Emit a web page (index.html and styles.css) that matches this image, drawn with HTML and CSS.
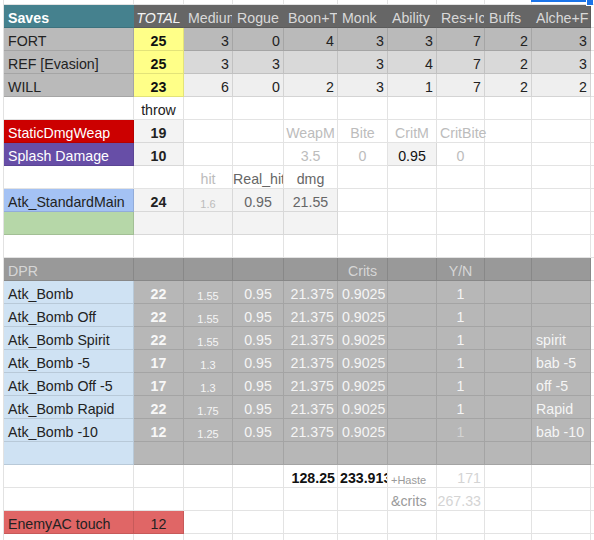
FILE: index.html
```html
<!DOCTYPE html>
<html>
<head>
<meta charset="utf-8">
<link rel="stylesheet" href="styles.css">
</head>
<body>
<div class="sheet">
  <div class="c top"></div><div class="c top"></div><div class="c top"></div><div class="c top"></div><div class="c top"></div><div class="c top"></div><div class="c top"></div><div class="c top"></div><div class="c top"></div><div class="c top"></div><div class="c top"></div>

  <div class="c teal b">Saves</div><div class="c dk it ctr">TOTAL</div><div class="c dk">Medium</div><div class="c dk">Rogue</div><div class="c dk">Boon+T</div><div class="c dk">Monk</div><div class="c dk">Ability</div><div class="c dk">Res+Ic</div><div class="c dk">Buffs</div><div class="c dk last">Alche+F</div><div class="c"></div>

  <div class="c g1">FORT</div><div class="c yel b ctr">25</div><div class="c g1 r">3</div><div class="c g1 r">0</div><div class="c g1 r">4</div><div class="c g1 r">3</div><div class="c g1 r">3</div><div class="c g1 r">7</div><div class="c g1 r">2</div><div class="c g1 r">3</div><div class="c"></div>

  <div class="c g1">REF [Evasion]</div><div class="c yel b ctr">25</div><div class="c g2 r">3</div><div class="c g2 r">3</div><div class="c g2 r"></div><div class="c g2 r">3</div><div class="c g2 r">4</div><div class="c g2 r">7</div><div class="c g2 r">2</div><div class="c g2 r">3</div><div class="c"></div>

  <div class="c g1">WILL</div><div class="c yel b ctr">23</div><div class="c g3 r">6</div><div class="c g3 r">0</div><div class="c g3 r">2</div><div class="c g3 r">3</div><div class="c g3 r">1</div><div class="c g3 r">7</div><div class="c g3 r">2</div><div class="c g3 r">2</div><div class="c"></div>

  <div class="c"></div><div class="c ctr">throw</div><div class="c"></div><div class="c"></div><div class="c"></div><div class="c"></div><div class="c"></div><div class="c"></div><div class="c"></div><div class="c"></div><div class="c"></div>

  <div class="c red">StaticDmgWeap</div><div class="c lt b ctr">19</div><div class="c"></div><div class="c"></div><div class="c faint ctr">WeapM</div><div class="c faint ctr">Bite</div><div class="c faint ctr">CritM</div><div class="c faint spill">CritBite</div><div class="c"></div><div class="c"></div><div class="c"></div>

  <div class="c purple">Splash Damage</div><div class="c lt b ctr">10</div><div class="c"></div><div class="c"></div><div class="c faint ctr">3.5</div><div class="c faint ctr">0</div><div class="c lt ctr blk">0.95</div><div class="c faint ctr">0</div><div class="c"></div><div class="c"></div><div class="c"></div>

  <div class="c"></div><div class="c"></div><div class="c faint ctr">hit</div><div class="c mid ctr">Real_hit</div><div class="c mid ctr">dmg</div><div class="c"></div><div class="c"></div><div class="c"></div><div class="c"></div><div class="c"></div><div class="c"></div>

  <div class="c blue">Atk_StandardMain</div><div class="c lt b ctr">24</div><div class="c lt faint ctr sm">1.6</div><div class="c lt mid ctr">0.95</div><div class="c lt mid ctr">21.55</div><div class="c"></div><div class="c"></div><div class="c"></div><div class="c"></div><div class="c"></div><div class="c"></div>

  <div class="c green"></div><div class="c lt"></div><div class="c lt"></div><div class="c lt"></div><div class="c lt"></div><div class="c"></div><div class="c"></div><div class="c"></div><div class="c"></div><div class="c"></div><div class="c"></div>

  <div class="c"></div><div class="c"></div><div class="c"></div><div class="c"></div><div class="c"></div><div class="c"></div><div class="c"></div><div class="c"></div><div class="c"></div><div class="c"></div><div class="c"></div>

  <div class="c g9">DPR</div><div class="c g9"></div><div class="c g9"></div><div class="c g9"></div><div class="c g9"></div><div class="c g9 ctr">Crits</div><div class="c g9"></div><div class="c g9 ctr">Y/N</div><div class="c g9"></div><div class="c g9"></div><div class="c"></div>

  <div class="c lb">Atk_Bomb</div><div class="c g7 b ctr">22</div><div class="c g7 ctr sm">1.55</div><div class="c g7 ctr">0.95</div><div class="c g7 r">21.375</div><div class="c g7 r">0.9025</div><div class="c g7"></div><div class="c g7 ctr">1</div><div class="c g7"></div><div class="c g7"></div><div class="c"></div>

  <div class="c lb">Atk_Bomb Off</div><div class="c g7 b ctr">22</div><div class="c g7 ctr sm">1.55</div><div class="c g7 ctr">0.95</div><div class="c g7 r">21.375</div><div class="c g7 r">0.9025</div><div class="c g7"></div><div class="c g7 ctr">1</div><div class="c g7"></div><div class="c g7"></div><div class="c"></div>

  <div class="c lb">Atk_Bomb Spirit</div><div class="c g7 b ctr">22</div><div class="c g7 ctr sm">1.55</div><div class="c g7 ctr">0.95</div><div class="c g7 r">21.375</div><div class="c g7 r">0.9025</div><div class="c g7"></div><div class="c g7 ctr">1</div><div class="c g7"></div><div class="c g7">spirit</div><div class="c"></div>

  <div class="c lb">Atk_Bomb -5</div><div class="c g7 b ctr">17</div><div class="c g7 ctr sm">1.3</div><div class="c g7 ctr">0.95</div><div class="c g7 r">21.375</div><div class="c g7 r">0.9025</div><div class="c g7"></div><div class="c g7 ctr">1</div><div class="c g7"></div><div class="c g7">bab -5</div><div class="c"></div>

  <div class="c lb">Atk_Bomb Off -5</div><div class="c g7 b ctr">17</div><div class="c g7 ctr sm">1.3</div><div class="c g7 ctr">0.95</div><div class="c g7 r">21.375</div><div class="c g7 r">0.9025</div><div class="c g7"></div><div class="c g7 ctr">1</div><div class="c g7"></div><div class="c g7">off -5</div><div class="c"></div>

  <div class="c lb">Atk_Bomb Rapid</div><div class="c g7 b ctr">22</div><div class="c g7 ctr sm">1.75</div><div class="c g7 ctr">0.95</div><div class="c g7 r">21.375</div><div class="c g7 r">0.9025</div><div class="c g7"></div><div class="c g7 ctr">1</div><div class="c g7"></div><div class="c g7">Rapid</div><div class="c"></div>

  <div class="c lb">Atk_Bomb -10</div><div class="c g7 b ctr">12</div><div class="c g7 ctr sm">1.25</div><div class="c g7 ctr">0.95</div><div class="c g7 r">21.375</div><div class="c g7 r">0.9025</div><div class="c g7"></div><div class="c g7 ctr dim">1</div><div class="c g7"></div><div class="c g7">bab -10</div><div class="c"></div>

  <div class="c lb"></div><div class="c g7"></div><div class="c g7"></div><div class="c g7"></div><div class="c g7"></div><div class="c g7"></div><div class="c g7"></div><div class="c g7"></div><div class="c g7"></div><div class="c g7"></div><div class="c"></div>

  <div class="c"></div><div class="c"></div><div class="c"></div><div class="c"></div><div class="c b r blk tight">128.25</div><div class="c b blk tight">233.913</div><div class="c hint sm">+Haste</div><div class="c pale r">171</div><div class="c"></div><div class="c"></div><div class="c"></div>

  <div class="c"></div><div class="c"></div><div class="c"></div><div class="c"></div><div class="c"></div><div class="c"></div><div class="c hint">&amp;crits</div><div class="c pale r">267.33</div><div class="c"></div><div class="c"></div><div class="c"></div>

  <div class="c salmon">EnemyAC touch</div><div class="c salmon ctr">12</div><div class="c"></div><div class="c"></div><div class="c"></div><div class="c"></div><div class="c"></div><div class="c"></div><div class="c"></div><div class="c"></div><div class="c"></div>

  <div class="c"></div><div class="c"></div><div class="c"></div><div class="c"></div><div class="c"></div><div class="c"></div><div class="c"></div><div class="c"></div><div class="c"></div><div class="c"></div><div class="c"></div>
</div>
<div class="sel"></div>
<div class="handle"></div>
</body>
</html>
```

FILE: styles.css
```css
html, body {
  margin: 0;
  padding: 0;
  background: #ffffff;
  overflow: hidden;
}

body {
  width: 594px;
  height: 540px;
  position: relative;
  font-family: "Liberation Sans", Arial, sans-serif;
  font-size: 14.2px;
  color: #222222;
}

.sheet {
  display: grid;
  grid-template-columns: 130px 50px 49px 51px 54px 50px 49px 48px 47px 59px 60px;
  grid-template-rows: 5px;
  grid-auto-rows: 23px;
  margin-left: 3px;
  border-left: 1px solid #e2e2e2;
}

.c {
  box-sizing: border-box;
  border-right: 1px solid rgba(0, 0, 0, 0.11);
  border-bottom: 1px solid rgba(0, 0, 0, 0.11);
  padding: 5px 4px 1px 4px;
  line-height: 16px;
  white-space: nowrap;
  overflow: hidden;
  min-width: 0;
}

.top { padding: 0; }

.b { font-weight: bold; }
.it { font-style: italic; }
.ctr { text-align: center; padding-left: 0; padding-right: 0; }
.r { text-align: right; padding-right: 3px; }
.tight { padding-left: 2px; padding-right: 2px; }

.teal { background: #45818e; color: #ffffff; border-right-color: transparent; }
.dk { background: #666666; color: #d9d9d9; border-right-color: transparent; }
.dk.it { color: #f3f3f3; }
.dk.last { border-right-color: rgba(0, 0, 0, 0.11); }

.yel { background: #ffff88; color: #111111; }
.g1 { background: #bababa; color: #222222; }
.g2 { background: #d9d9d9; color: #222222; }
.g3 { background: #efefef; color: #222222; }
.lt { background: #f3f3f3; }
.blk { color: #111111; }

.red { background: #cc0000; color: #ffffff; }
.purple { background: #674ea7; color: #ffffff; }
.blue { background: #a4c2f4; color: #222222; }
.green { background: #b6d7a8; }
.lb { background: #cfe2f3; color: #222222; }
.salmon { background: #e06666; color: #222222; }

.g9 { background: #999999; color: #d6d6d6; }
.g7 { background: #b7b7b7; color: #f5f5f5; border-right-color: rgba(0, 0, 0, 0.1); border-bottom-color: rgba(0, 0, 0, 0.1); }
.g7.b { color: #f8f8f8; }
.dim { color: #d4d4d4; }

.faint { color: #bcbcbc; }
.mid { color: #666666; }
.hint { color: #9a9a9a; padding-left: 3px; }
.pale { color: #d4d4d4; padding-left: 0; }

.sm {
  font-size: 11px;
  padding-top: 7px;
}

.spill { overflow: visible; padding-left: 3px; position: relative; z-index: 1; }

.sel {
  position: absolute;
  left: 531px;
  top: 0;
  width: 59px;
  height: 2px;
  background: #1a73e8;
}

.handle {
  position: absolute;
  left: 586px;
  top: 0;
  width: 6px;
  height: 5px;
  background: #1a73e8;
  border-left: 1px solid #ffffff;
  border-bottom: 1px solid #ffffff;
}
```
